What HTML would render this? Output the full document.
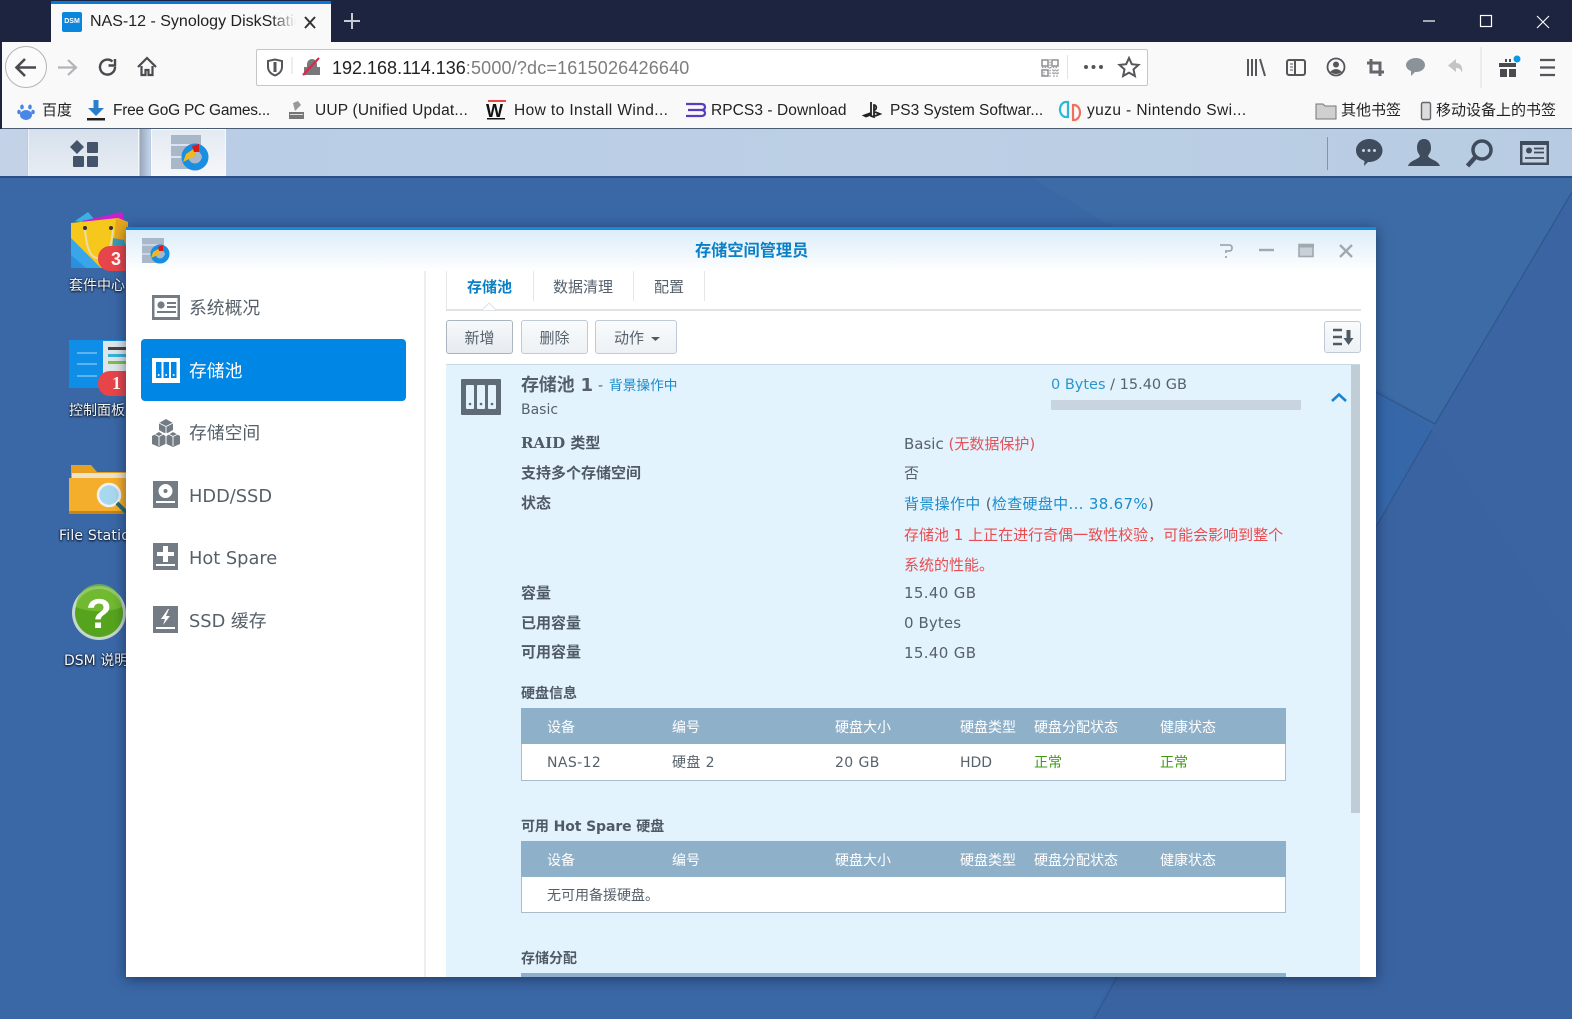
<!DOCTYPE html>
<html lang="zh"><head><meta charset="utf-8"><title>NAS-12 - Synology DiskStation</title>
<style>
html,body{margin:0;padding:0;width:1572px;height:1019px;overflow:hidden;background:#3a66a4}
*{box-sizing:border-box}
div,span{font-family:"DejaVu Sans","Noto Sans CJK SC",sans-serif}
.a{position:absolute}
.t{position:absolute;white-space:nowrap;line-height:20px;height:20px}
.c{font-family:"Liberation Sans","Noto Sans CJK SC",sans-serif;color:#222;font-size:15.5px}
svg{position:absolute;left:0;top:0;overflow:visible}
.d{color:#fff;font-size:14px;text-shadow:0 1px 2px #000,0 0 2px #0a2040;opacity:.95}
.l{font-size:15px;font-weight:bold;color:#4f5a65;left:521px}
.v{font-size:15px;color:#56616b;left:904px}
.m{font-size:17.8px;color:#56606a;left:189px}
.btn{position:absolute;top:320px;height:34px;border:1px solid #bfcad6;border-radius:3px;background:linear-gradient(#f9fbfc,#edf1f5);text-align:center;line-height:34px;font-size:14px;color:#56616b}
.th{position:absolute;left:521px;width:765px;height:36px;background:#8fb0c9}
.tb{position:absolute;left:521px;width:765px;height:37px;background:#fff;border:1px solid #a9bccb;border-top:0}
.h{font-size:14px;color:#fff}
.r{font-size:14px;color:#56616b;letter-spacing:.4px}
.g{font-size:14px;color:#3c9c10}
.s{font-size:14px;font-weight:bold;color:#4f5a65;left:521px}
</style></head><body>

<!-- desktop background -->
<svg width="1572" height="1019" viewBox="0 0 1572 1019">
<rect width="1572" height="1019" fill="#3a64a2"/>
<polygon points="1030,177 1572,177 1572,192 1435,424" fill="#3d6ba6"/>
<polygon points="0,177 1030,177 1435,424 1090,1019 0,1019" fill="#3a67a6"/>
<polygon points="1376,392 1432,428 1376,527" fill="#3668a9"/>
<polygon points="1117,977 1094,1019 1572,1019 1572,640 1432,430" fill="#3a63a1"/>
<path d="M1572,192L1435,424L1376,392M1432,430L1376,527M1117,977L1094,1019" stroke="#30588f" stroke-width="1.300" fill="none"/>
</svg>

<!-- desktop icons -->
<svg width="1572" height="1019" viewBox="0 0 1572 1019">
 <!-- package center -->
 <polygon points="75,221 88,212 100,226" fill="#35b4e4"/>
 <polygon points="82,221 122,212 126,226 88,230" fill="#c81fd0"/>
 <polygon points="71,223 118,218 128,222 128,268 71,268" fill="#f6c81c"/>
 <polygon points="116,218 128,222 128,268 112,268" fill="#e8a81c"/>
 <polygon points="71,238 101,268 71,268" fill="#3aa6ea"/>
 <polygon points="71,255 86,268 71,268" fill="#2a90dc"/>
 <polygon points="113,238 124,240 128,252 112,252" fill="#3a9ab8"/>
 <path d="M85,229q2,29 13,29q13,0 15,-29" stroke="#ecdca8" stroke-width="2" fill="none"/>
 <circle cx="85" cy="228" r="2" fill="#333"/><circle cx="111" cy="228" r="2" fill="#333"/>
 <rect x="98" y="246" width="40" height="25" rx="12" fill="#e8454a"/>
 <text x="111" y="265" font-family="Liberation Sans,sans-serif" font-weight="bold" font-size="18" fill="#fff">3</text>
 <!-- control panel -->
 <rect x="69" y="340" width="60" height="48" fill="#0e8ee6"/>
 <rect x="103" y="341" width="26" height="46" fill="#dfe6ea"/>
 <rect x="108" y="347" width="18" height="3" fill="#444"/><rect x="108" y="354" width="18" height="3" fill="#37b2d8"/><rect x="108" y="361" width="18" height="3" fill="#7cc04a"/>
 <path d="M77,353h20M77,364h20M77,376h20" stroke="#5cb4f0" stroke-width="2"/>
 <rect x="98" y="371" width="40" height="25" rx="12" fill="#e8454a"/>
 <text x="112" y="389" font-family="Liberation Serif,serif" font-weight="bold" font-size="18" fill="#fff">1</text>
 <!-- file station -->
 <path d="M71,465h20l6,7h32v10H71z" fill="#e8a020"/>
 <rect x="72" y="473" width="57" height="6" fill="#eee2c8"/>
 <path d="M69,478h60v35H69z" fill="#f5ae2c"/>
 <rect x="69" y="511" width="60" height="3" fill="#c88416"/>
 <circle cx="109" cy="495" r="11" fill="#a8d8f0" stroke="#f2f2f2" stroke-width="2.500"/>
 <path d="M117,503l10,10" stroke="#2c6a66" stroke-width="4"/>
 <!-- help -->
 <circle cx="99" cy="613" r="27" fill="#c8d6d0"/>
 <circle cx="99" cy="613" r="24" fill="#56a41e"/>
 <path d="M76,607a23,23 0 0 1 46,0a32,14 0 0 1 -46,0" fill="#7cc238" opacity=".7"/>
 <text x="99" y="628" text-anchor="middle" font-family="Liberation Sans,sans-serif" font-weight="bold" font-size="42" fill="#fff">?</text>
</svg>
<div class="t d" style="left:69px;top:276px">套件中心</div>
<div class="t d" style="left:69px;top:401px">控制面板</div>
<div class="t d" style="left:59px;top:526px;letter-spacing:.2px">File Station</div>
<div class="t d" style="left:64px;top:651px">DSM 说明</div>

<!-- window -->
<div class="a" style="left:126px;top:227px;width:1250px;height:750px;background:#fff;box-shadow:0 2px 12px rgba(10,20,50,.55)">
 <div class="a" style="left:0;top:0;width:1250px;height:3px;background:#1388dc"></div>
 <div class="a" style="left:0;top:3px;width:1250px;height:42px;background:linear-gradient(#dcedf9,#fff)"></div>
 <div class="a" style="left:298px;top:44px;width:2px;height:706px;background:#eceef0"></div>
</div>
<div class="t" style="left:695px;top:241px;font-size:16.200px;font-weight:bold;color:#0a80c6">存储空间管理员</div>

<!-- sidebar -->
<div class="a" style="left:141px;top:339px;width:265px;height:62px;background:#0086e5;border-radius:4px"></div>
<div class="t m" style="top:299px">系统概况</div>
<div class="t m" style="top:362px;color:#fff">存储池</div>
<div class="t m" style="top:424px">存储空间</div>
<div class="t m" style="top:487px">HDD/SSD</div>
<div class="t m" style="top:549px">Hot Spare</div>
<div class="t m" style="top:612px">SSD 缓存</div>

<!-- tabs -->
<div class="a" style="left:446px;top:309px;width:915px;height:2px;background:#dfe3e6"></div>
<div class="a" style="left:446px;top:271px;width:1px;height:38px;background:#e4e7ea"></div>
<div class="a" style="left:533px;top:271px;width:1px;height:30px;background:#e4e7ea"></div>
<div class="a" style="left:633px;top:271px;width:1px;height:30px;background:#e4e7ea"></div>
<div class="a" style="left:704px;top:271px;width:1px;height:30px;background:#e4e7ea"></div>
<div class="t" style="left:467px;top:277px;font-size:15px;font-weight:bold;color:#0a80c6">存储池</div>
<div class="t" style="left:553px;top:277px;font-size:15px;color:#56616b">数据清理</div>
<div class="t" style="left:654px;top:277px;font-size:15px;color:#56616b">配置</div>

<!-- buttons -->
<div class="btn" style="left:446px;width:67px;border-color:#a9b6c2;background:linear-gradient(#f7f9fb,#e6ebf0);font-size:15px">新增</div>
<div class="btn" style="left:521px;width:67px;font-size:15px">删除</div>
<div class="btn" style="left:595px;width:82px;text-align:left;padding-left:18px;font-size:15px">动作</div>
<div class="btn" style="left:1324px;width:37px;top:321px;height:32px"></div>

<!-- panel -->
<div class="a" style="left:446px;top:364px;width:914px;height:613px;background:#e3f3fd;border-top:1px solid #c9d9e4"></div>
<div class="a" style="left:1351px;top:365px;width:9px;height:448px;background:#c0ccd6"></div>
<div class="t" style="left:521px;top:376px;font-size:18px;font-weight:bold;color:#56606a;letter-spacing:-.2px">存储池 1</div>
<div class="t" style="left:598px;top:376px;font-size:14px;color:#56616b">-</div>
<div class="t" style="left:609px;top:376px;font-size:13.700px;color:#1a8ccc">背景操作中</div>
<div class="t" style="left:521px;top:400px;font-size:14px;color:#56616b">Basic</div>
<div class="t" style="left:1051px;top:375px;font-size:14.500px;color:#56616b"><span style="color:#2a96cc">0 Bytes</span> / 15.40 GB</div>
<div class="a" style="left:1051px;top:400px;width:250px;height:10px;background:#c8d4de"></div>

<div class="t l" style="top:433px;font-family:'DejaVu Serif','DejaVu Sans','Noto Sans CJK SC',serif">RAID 类型</div>
<div class="t l" style="top:463px">支持多个存储空间</div>
<div class="t l" style="top:493px">状态</div>
<div class="t l" style="top:583px">容量</div>
<div class="t l" style="top:613px">已用容量</div>
<div class="t l" style="top:642px">可用容量</div>

<div class="t v" style="top:434px">Basic <span style="color:#e0545c">(无数据保护)</span></div>
<div class="t v" style="top:463px">否</div>
<div class="t v" style="top:494px;color:#1a8ccc;letter-spacing:.32px">背景操作中 <span style="color:#56616b">(</span>检查硬盘中... 38.67%<span style="color:#56616b">)</span></div>
<div class="t v" style="top:525px;color:#e84c50;font-size:15px">存储池 1 上正在进行奇偶一致性校验，可能会影响到整个</div>
<div class="t v" style="top:555px;color:#e84c50;font-size:15px">系统的性能。</div>
<div class="t v" style="top:583px;letter-spacing:.35px">15.40 GB</div>
<div class="t v" style="top:613px;letter-spacing:.1px">0 Bytes</div>
<div class="t v" style="top:643px;letter-spacing:.35px">15.40 GB</div>

<div class="t s" style="top:684px">硬盘信息</div>
<div class="th" style="top:708px"></div><div class="tb" style="top:744px"></div>
<div class="t h" style="left:547px;top:718px">设备</div><div class="t h" style="left:672px;top:718px">编号</div><div class="t h" style="left:835px;top:718px">硬盘大小</div><div class="t h" style="left:960px;top:718px">硬盘类型</div><div class="t h" style="left:1034px;top:718px">硬盘分配状态</div><div class="t h" style="left:1160px;top:718px">健康状态</div>
<div class="t r" style="left:547px;top:753px">NAS-12</div><div class="t r" style="left:672px;top:753px">硬盘 2</div><div class="t r" style="left:835px;top:753px">20 GB</div><div class="t r" style="left:960px;top:753px;letter-spacing:0">HDD</div><div class="t g" style="left:1034px;top:753px">正常</div><div class="t g" style="left:1160px;top:753px">正常</div>

<div class="t s" style="top:817px;letter-spacing:-.1px">可用 Hot Spare 硬盘</div>
<div class="th" style="top:841px"></div><div class="tb" style="top:877px;height:36px"></div>
<div class="t h" style="left:547px;top:851px">设备</div><div class="t h" style="left:672px;top:851px">编号</div><div class="t h" style="left:835px;top:851px">硬盘大小</div><div class="t h" style="left:960px;top:851px">硬盘类型</div><div class="t h" style="left:1034px;top:851px">硬盘分配状态</div><div class="t h" style="left:1160px;top:851px">健康状态</div>
<div class="t" style="left:547px;top:886px;font-size:14px;color:#56616b">无可用备援硬盘。</div>

<div class="t s" style="top:949px">存储分配</div>
<div class="a" style="left:521px;top:973px;width:765px;height:4px;background:#8fb0c9"></div>

<!-- browser chrome -->
<div class="a" style="left:0;top:0;width:1572px;height:42px;background:#1d2440"></div>
<div class="a" style="left:51px;top:1px;width:280px;height:41px;background:#f9f9fa;border-top:3px solid #0a78d8"></div>
<div class="a" style="left:0;top:42px;width:1572px;height:87px;background:#f9f9fa;border-bottom:1px solid #4a5a70"></div>
<div class="a" style="left:0;top:0;width:2px;height:129px;background:#1d2440"></div>
<div class="a" style="left:62px;top:12px;width:20px;height:20px;background:#0a86dc;border-radius:2px;color:#fff;font:bold 7px/20px 'Liberation Sans',sans-serif;text-align:center">DSM</div>
<div class="t c" style="left:90px;top:12px;width:206px;overflow:hidden;font-size:16px;-webkit-mask-image:linear-gradient(90deg,#000 88%,transparent);mask-image:linear-gradient(90deg,#000 88%,transparent)">NAS-12 - Synology DiskStation</div>
<div class="a" style="left:256px;top:49px;width:892px;height:37px;background:#fff;border:1px solid #c6c6c8;border-radius:2px"></div>
<div class="t c" style="left:332px;top:58px;font-size:18px"><span style="font-family:'Liberation Sans',sans-serif">192.168.114.136</span><span style="font-family:'Liberation Sans',sans-serif;color:#7d7d80;letter-spacing:.17px">:5000/?dc=1615026426640</span></div>

<div class="t c" style="left:42px;top:101px;font-size:15px">百度</div>
<div class="t c" style="left:113px;top:101px;letter-spacing:-.25px">Free GoG PC Games...</div>
<div class="t c" style="left:315px;top:101px;letter-spacing:.2px">UUP (Unified Updat...</div>
<div class="t c" style="left:514px;top:101px;letter-spacing:.4px">How to Install Wind...</div>
<div class="t c" style="left:711px;top:101px;letter-spacing:.07px">RPCS3 - Download</div>
<div class="t c" style="left:890px;top:101px;letter-spacing:-.05px">PS3 System Softwar...</div>
<div class="t c" style="left:1087px;top:101px;letter-spacing:.4px">yuzu - Nintendo Swi...</div>
<div class="t c" style="left:1341px;top:101px;font-size:15px">其他书签</div>
<div class="t c" style="left:1436px;top:101px;font-size:15px">移动设备上的书签</div>

<!-- DSM taskbar -->
<div class="a" style="left:0;top:129px;width:1572px;height:49px;background:linear-gradient(90deg,#b8cde6,#bccfe5 60%,#b7cbe2);border-bottom:2px solid #2b4f82"></div>
<div class="a" style="left:0;top:129px;width:27px;height:47px;background:#c3d2e6"></div>
<div class="a" style="left:28px;top:129px;width:111px;height:47px;background:linear-gradient(#d6e0ec,#e8edf3);border-right:1px solid #f4f6f8;border-left:1px solid #eef2f6"></div>
<div class="a" style="left:140px;top:129px;width:10px;height:47px;background:linear-gradient(90deg,#98a8bc,#c3d2e6)"></div>
<div class="a" style="left:151px;top:129px;width:75px;height:47px;background:linear-gradient(#e4eaf2,#f4f6f9);border:1px solid #f8f9fb"></div>
<div class="a" style="left:1327px;top:137px;width:1px;height:33px;background:#8494a8"></div>

<svg width="1572" height="1019" viewBox="0 0 1572 1019">
 <!-- tab close, new tab -->
 <path d="M305,17l10,11M315,17l-10,11" stroke="#333" stroke-width="2" fill="none"/>
 <path d="M352,13v16M344,21h16" stroke="#c6cad4" stroke-width="2" fill="none"/>
 <!-- window controls -->
 <path d="M1423,21h12" stroke="#fff" stroke-width="1.200"/>
 <rect x="1480.500" y="15.500" width="11" height="11" stroke="#fff" stroke-width="1.200" fill="none"/>
 <path d="M1537,16l12,12M1549,16l-12,12" stroke="#fff" stroke-width="1.100"/>
 <!-- nav -->
 <circle cx="26" cy="67" r="20.500" fill="#fbfbfb" stroke="#b4b4b6"/>
 <path d="M36,67.500H17M25,59l-8.500,8.500l8.500,8.500" stroke="#4a4a4f" stroke-width="2.600" fill="none"/>
 <path d="M76,67.500H58M68,60l8,7.500l-8,7.500" stroke="#b4b4b8" stroke-width="2.200" fill="none"/>
 <path d="M115,67a7.500,7.500 0 1 1 -2.500,-5.500M115,59v6.500h-6.500" stroke="#4a4a4f" stroke-width="2.400" fill="none"/>
 <path d="M138,67l9,-9l9,9M141.500,66v9h4v-5h3v5h4v-9" stroke="#4a4a4f" stroke-width="2.200" fill="none"/>
 <!-- shield + lock -->
 <path d="M268,61l7,-1.500l7,1.500v6c0,4 -3,7 -7,8.500c-4,-1.500 -7,-4.500 -7,-8.500z" fill="none" stroke="#55555a" stroke-width="2"/>
 <path d="M275,62v10" stroke="#55555a" stroke-width="3"/>
 <path d="M292,57v17" stroke="#dcdcde"/>
 <path d="M304,75V67h3v-3a5,5 0 0 1 10,0v3h3v8z" fill="#77777c"/>
 <path d="M303,75l16,-17" stroke="#e0244c" stroke-width="2.200"/>
 <!-- qr etc -->
 <g fill="none" stroke="#8e8e92" stroke-width="1.500"><path d="M1042,60h6v6h-6zM1052,60h6v6h-6zM1042,70h6v6h-6z"/></g>
 <path d="M1042,67.500h16M1044,69v8M1050,59v18M1052,70h7M1052,73h7M1054,70v7M1057,70v7" stroke="#9a9a9e" stroke-width="1.300" stroke-dasharray="1.500 1.200" fill="none"/>
 <path d="M1067.500,55v24" stroke="#e4e4e6"/>
 <g fill="#55555a"><circle cx="1086" cy="67" r="2"/><circle cx="1093.500" cy="67" r="2"/><circle cx="1101" cy="67" r="2"/></g>
 <path d="M1129,58l2.800,6.200l6.700,.7l-5,4.500l1.400,6.600l-5.900,-3.400l-5.900,3.400l1.400,-6.600l-5,-4.500l6.700,-.7z" fill="none" stroke="#55555a" stroke-width="2"/>
 <!-- right toolbar -->
 <path d="M1248,59v17M1252,59v17M1256,59v17M1260,59l5,17" stroke="#55555a" stroke-width="2" fill="none"/>
 <rect x="1287" y="60" width="18" height="15" rx="2" fill="none" stroke="#55555a" stroke-width="2"/><path d="M1295,60v15" stroke="#55555a" stroke-width="2"/><path d="M1290,64h3M1290,67h3M1290,70h3" stroke="#55555a"/>
 <circle cx="1336" cy="67" r="8.500" fill="none" stroke="#55555a" stroke-width="1.800"/><circle cx="1336" cy="64.500" r="3" fill="#55555a"/><path d="M1330,72q6,-6 12,0q-6,4 -12,0z" fill="#55555a"/>
 <path d="M1371,59v13h13M1367,63h13v13" stroke="#66666c" stroke-width="3" fill="none"/>
 <path d="M1416,58c5,0 9,3 9,7s-4,7 -9,7l-1,0l-4,4v-5c-3,-1 -5,-3.500 -5,-6c0,-4 5,-7 10,-7z" fill="#8a929a"/>
 <path d="M1456,59l-8,6.500l8,6.500v-4c3,0 5,1 6,5c1,-6 -1,-10 -6,-10z" fill="#c4c4c8"/>
 <path d="M1481,47v41" stroke="#dedee0"/>
 <path d="M1499,63h17v4h-17zM1500,69h7v8h-7zM1509,69h7v8h-7zM1505,59h2v3h-2zM1509,59h2v3h-2z" fill="#4a4a4f"/>
 <circle cx="1517" cy="59" r="3.500" fill="#0a9ae0"/>
 <path d="M1540,60h15M1540,67.500h15M1540,75h15" stroke="#55555a" stroke-width="2.200"/>
 <!-- bookmark icons -->
 <g fill="#4a86e8"><ellipse cx="26" cy="115" rx="6" ry="5"/><ellipse cx="22" cy="107" rx="1.800" ry="2.500"/><ellipse cx="30" cy="107" rx="1.800" ry="2.500"/><ellipse cx="19" cy="112" rx="1.800" ry="2.300"/><ellipse cx="33" cy="112" rx="1.800" ry="2.300"/></g>
 <path d="M96,100v11" stroke="#2a7fc8" stroke-width="5"/><path d="M88,108h16l-8,8z" fill="#2a7fc8"/><rect x="87" y="118" width="18" height="2.500" fill="#222"/>
 <rect x="289" y="112" width="15" height="7" fill="#777"/><path d="M293,103l5,-2l3,4l-6,6z" fill="#999"/><rect x="290" y="114" width="13" height="1" fill="#ddd"/>
 <rect x="488" y="100" width="18" height="2" fill="#e44"/>
 <text x="486" y="117" font-family="Liberation Sans,sans-serif" font-weight="bold" font-size="18" fill="#111">W</text>
 <rect x="487" y="118" width="18" height="1.500" fill="#111"/>
 <path d="M686,104h15q4,0 4,3q0,3 -4,3h-13M701,110q4,0 4,3q0,3 -4,3h-15" stroke="#5a3cc0" stroke-width="2.200" fill="none"/>
 <path d="M871,102v14l3,1v-12c3,0 3,5 0,5M871,113l-7,2.500l2,1l5,-2M875,112l5,2l-5,2" stroke="#222" stroke-width="1.800" fill="none"/>
 <path d="M1068,102h-2a6,7.500 0 0 0 0,15h2z" fill="none" stroke="#2ab8d8" stroke-width="2.200"/>
 <path d="M1073,105h1a6,7.500 0 0 1 0,15h-1z" fill="none" stroke="#f0705c" stroke-width="2.200"/>
 <path d="M1316,104h7l2,2h11v13h-20z" fill="#d0d0d0" stroke="#77777c"/>
 <rect x="1421.500" y="102.500" width="9" height="17" rx="1.500" fill="#dcdcde" stroke="#66666c" stroke-width="1.400"/>
 <!-- taskbar app icons -->
 <path d="M77,140l7,7l-7,7l-7,-7z" fill="#44546a"/>
 <rect x="87" y="142" width="11" height="11" rx="1" fill="#44546a"/><rect x="73" y="156" width="11" height="11" rx="1" fill="#44546a"/><rect x="87" y="156" width="11" height="11" rx="1" fill="#44546a"/>
 <!-- storage manager taskbar -->
 <rect x="171" y="135" width="30" height="34" fill="#a8b8c8"/>
 <path d="M171,145h24M171,157h20" stroke="#eef" stroke-width="1.500"/>
 <circle cx="195" cy="157" r="10" fill="none" stroke="#1a8ee0" stroke-width="7"/>
 <path d="M183,162l3,-8l9,-6v8z" fill="#f0b820"/>
 <path d="M192,146l7,-2v8l-5,0z" fill="#e01818"/>
 <!-- taskbar right -->
 <path d="M1369,139c7.500,0 13.500,5 13.500,11.500s-6,11.500 -13.500,11.500h-1l-4,4l.5,-5c-5,-2 -8.500,-5.500 -8.500,-10.500c0,-6.500 6,-11.500 13.500,-11.500z" fill="#3e4c5e"/>
 <g fill="#c8d4e2"><circle cx="1363.500" cy="150.500" r="1.500"/><circle cx="1369" cy="150.500" r="1.500"/><circle cx="1374.500" cy="150.500" r="1.500"/></g>
 <path d="M1424,139c5,0 7,4 7,9c0,4 -2,6 -3,8c2,4 10,4 12,10h-32c2,-6 10,-6 12,-10c-1,-2 -3,-4 -3,-8c0,-5 2,-9 7,-9z" fill="#3e4c5e"/>
 <circle cx="1482" cy="150" r="9" fill="none" stroke="#3e4c5e" stroke-width="3.500"/><path d="M1475.500,157l-8,9" stroke="#3e4c5e" stroke-width="4.500"/>
 <rect x="1520" y="141" width="29" height="24" fill="#3e4c5e"/><rect x="1522.500" y="145" width="24" height="17.500" fill="#c6d3e4"/>
 <circle cx="1529" cy="150.500" r="3" fill="#3e4c5e"/><path d="M1534,148.500h10M1534,152.500h10M1525,158h19" stroke="#3e4c5e" stroke-width="1.800"/>

 <!-- window app icon -->
 <rect x="142" y="238" width="22" height="25" fill="#a8b8c8"/>
 <path d="M142,245h17M142,254h14" stroke="#eef" stroke-width="1"/>
 <circle cx="160" cy="254" r="7" fill="none" stroke="#1a8ee0" stroke-width="5"/>
 <path d="M151,258l2,-6l7,-4v6z" fill="#f0b820"/><path d="M158,247l5,-2v6l-4,0z" fill="#e01818"/>
 <!-- window controls -->
 <path d="M1220,245h9q3,0 3,3q0,3 -3,3h-3v2M1226,256v2" stroke="#a0a8b0" stroke-width="1.800" fill="none"/>
 <path d="M1259,250h15" stroke="#a0a8b0" stroke-width="2.400"/>
 <rect x="1299" y="244.500" width="14" height="12" fill="#c8d0d8" stroke="#a0a8b0" stroke-width="1.600"/><rect x="1299" y="244" width="15" height="3.500" fill="#a0a8b0"/>
 <path d="M1340,245l12,12M1352,245l-12,12" stroke="#a0a8b0" stroke-width="2.400"/>

 <!-- sidebar icons -->
 <g fill="#737b84">
  <path fill-rule="evenodd" d="M152,295h28v25h-28zM154.500,298v19h23v-19z"/>
  <circle cx="161" cy="305" r="3.600"/><path d="M167,302h9v2h-9zM167,306h9v2h-9zM157,311h19v2h-19z"/>
 </g>
 <rect x="152" y="358" width="28" height="25" fill="#fff"/>
 <g fill="#0086e5"><rect x="156" y="362" width="5.500" height="16"/><rect x="163.500" y="362" width="5.500" height="16"/><rect x="171" y="362" width="5.500" height="16"/></g>
 <g fill="#fff"><circle cx="158.700" cy="375" r="1"/><circle cx="166.200" cy="375" r="1"/><circle cx="173.700" cy="375" r="1"/></g>
 <g fill="#737b84">
  <path d="M166,419l7,4v7l-7,4l-7,-4v-7z"/><path d="M159,432l6.500,4v8l-6.500,3l-7,-3v-8z"/><path d="M173,432l7,4v8l-7,3l-6.500,-3v-8z"/>
  <path fill-rule="evenodd" d="M153,481h25v27h-25zM165.500,484a7,7 0 1 0 .01,0zM156,501v2h19v-2z"/>
  <path fill-rule="evenodd" d="M153,543h25v27h-25zM163,546v6h-6v4h6v6h5v-6h6v-4h-6v-6zM156,564v2h19v-2z"/>
  <path fill-rule="evenodd" d="M153,606h25v27h-25zM168,609l-7,10h4l-2,6l7,-9h-4l3,-7zM156,627v2h19v-2z"/>
 </g>
 <path d="M152,433l7,3.500l6.500,-3.500M166.500,433l6.500,3.500l7,-3.500M159,436v10M173,436v10M159,423l7,3.500l7,-3.500M166,426v8" stroke="#fff" stroke-width=".9" fill="none"/>
 <circle cx="165.500" cy="491" r="2" fill="#737b84"/>
 <!-- tab notch -->
 <path d="M482,310l7,-7l7,7" fill="#fff" stroke="#dfe3e6"/>
 <!-- action caret -->
 <path d="M651,337h9l-4.500,4z" fill="#4f5a65"/>
 <!-- sort -->
 <path d="M1333,330h9M1333,337h9M1333,344h9" stroke="#4f5a65" stroke-width="2.400"/>
 <path d="M1346.500,330h4v8h3l-5,7l-5,-7h3z" fill="#4f5a65"/>
 <!-- pool icon -->
 <rect x="461" y="379" width="40" height="36" rx="1" fill="#5f6b76"/>
 <g fill="#e3f3fd"><rect x="466" y="385" width="8" height="24" rx="1"/><rect x="477" y="385" width="8" height="24" rx="1"/><rect x="488" y="385" width="8" height="24" rx="1"/></g>
 <g fill="#5f6b76"><circle cx="470" cy="404" r="1.300"/><circle cx="481" cy="404" r="1.300"/><circle cx="492" cy="404" r="1.300"/></g>
 <!-- chevron -->
 <path d="M1332,401l7,-6.500l7,6.500" stroke="#1a84d0" stroke-width="2.600" fill="none"/>
</svg>
</body></html>
